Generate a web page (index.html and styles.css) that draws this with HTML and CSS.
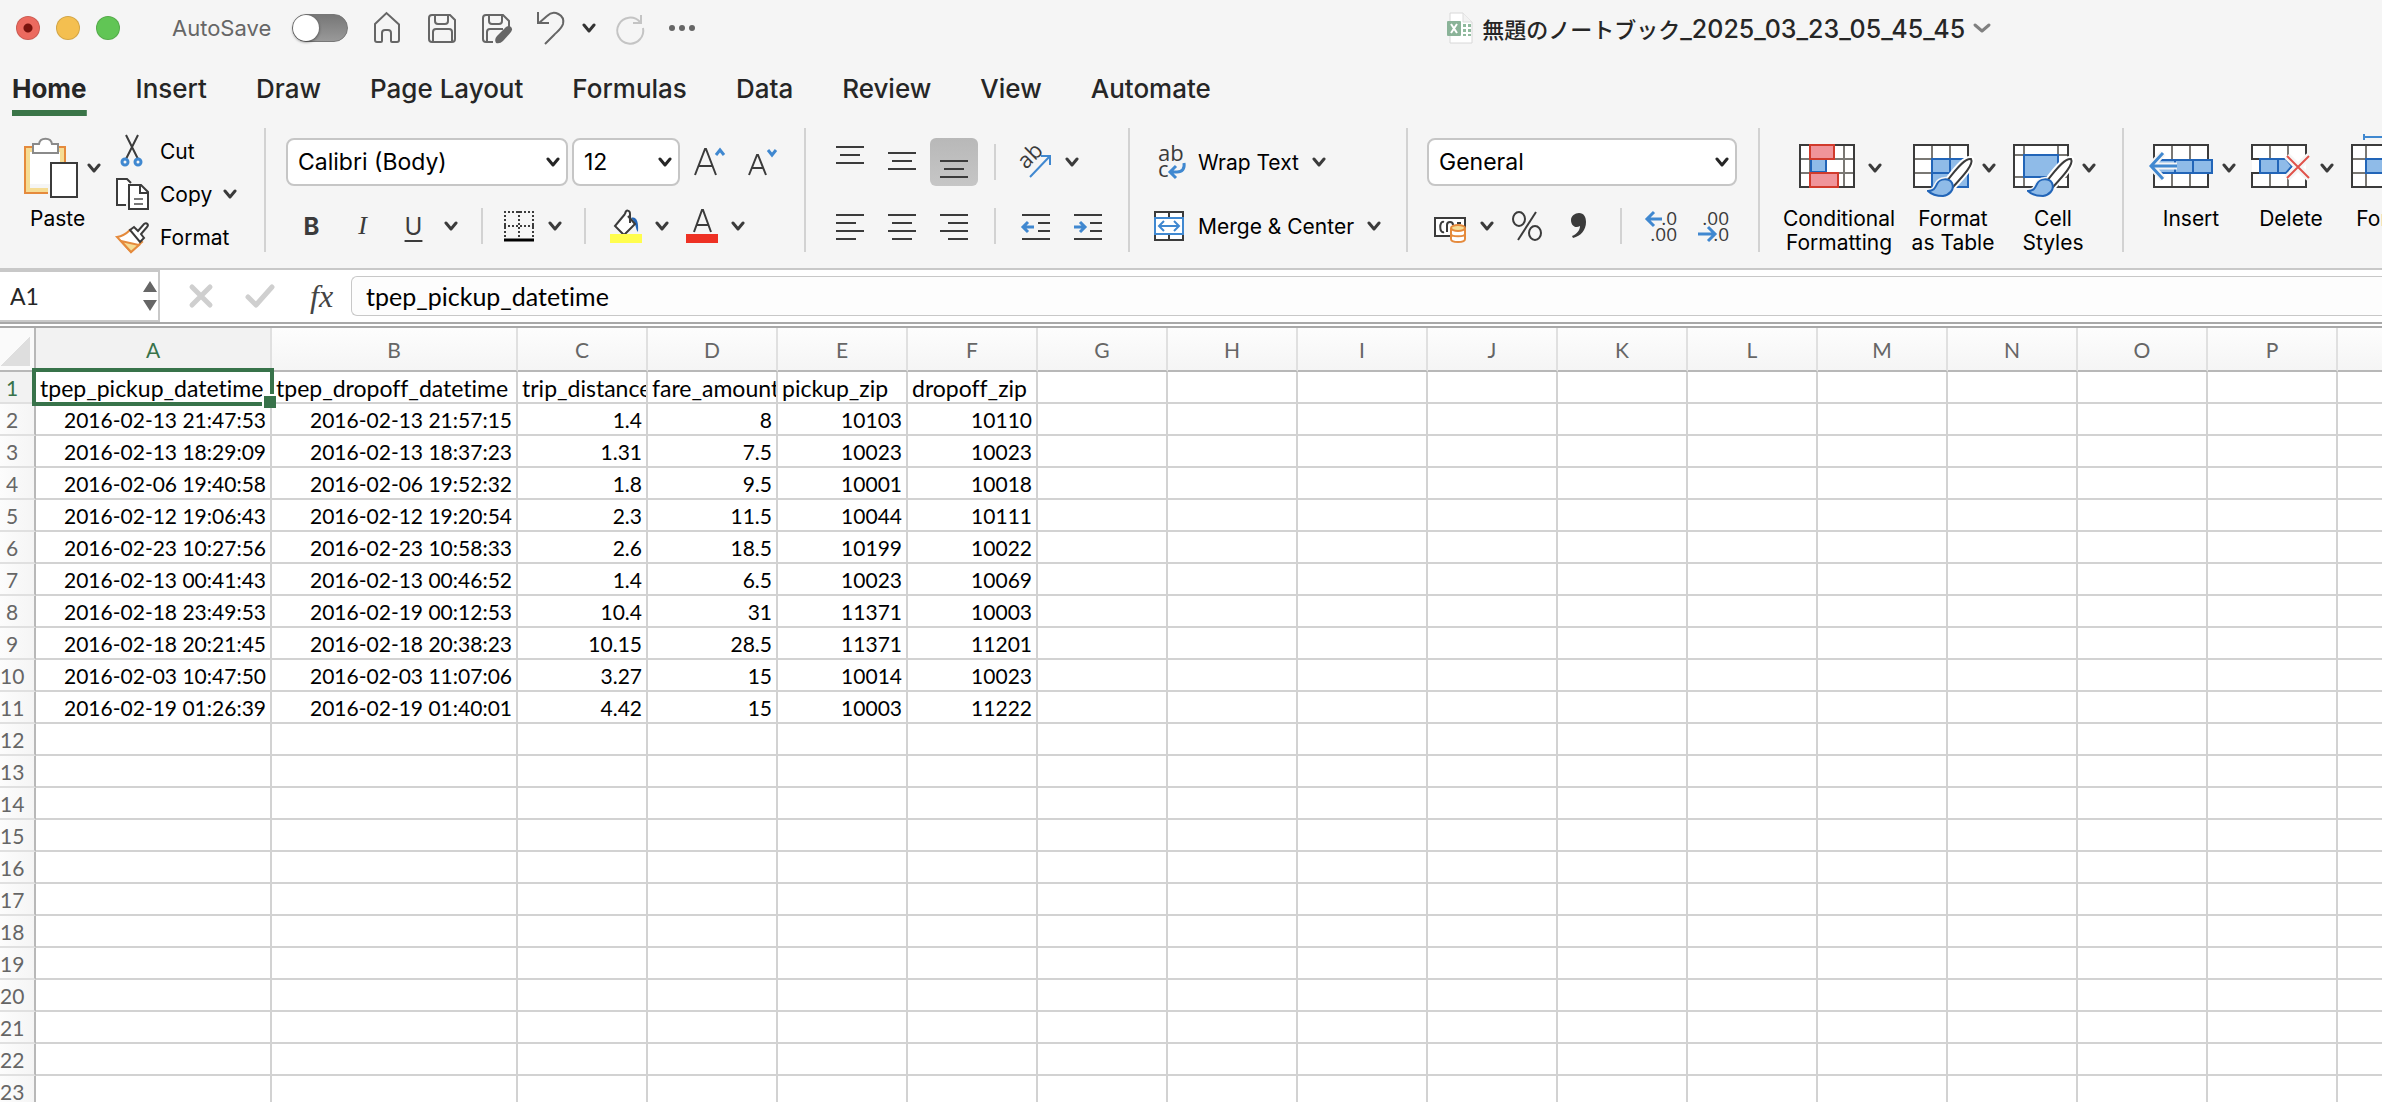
FILE: index.html
```html
<!DOCTYPE html>
<html lang="en">
<head>
<meta charset="utf-8">
<title>無題のノートブック_2025_03_23_05_45_45</title>
<link rel="stylesheet" href="styles.css">
</head>
<body>
<svg class="symbols" aria-hidden="true">
  <symbol id="chev" viewBox="0 0 14 10"><path d="M2 2l5 6 5-6" fill="none" stroke="currentColor" stroke-width="3" stroke-linecap="round" stroke-linejoin="round"/></symbol>
  <symbol id="brush" viewBox="0 0 48 42">
    <path d="M44 3C39 2 32 9 20 25l6 6C37 19 47 8 44 3z" fill="#fff" stroke="#fff" stroke-width="6"/>
    <path d="M1 35c6 0 7-3 9-7 3-6 12-6 15-1 3 7-3 12-9 13-6 0-11-1-15-5z" fill="#8fbbe8" stroke="#f5f5f5" stroke-width="5"/>
    <path d="M44 3C39 2 32 9 20 25l6 6C37 19 47 8 44 3z" fill="#fff" stroke="#3b3b3b" stroke-width="2"/>
    <path d="M1 35c6 0 7-3 9-7 3-6 12-6 15-1 3 7-3 12-9 13-6 0-11-1-15-5z" fill="#8fbbe8" stroke="#2265b8" stroke-width="2"/>
  </symbol>
</svg>

<header class="titlebar">
  <div class="lights">
    <button class="light red" aria-label="Close"></button>
    <button class="light yellow" aria-label="Minimize"></button>
    <button class="light green" aria-label="Zoom"></button>
  </div>
  <label class="autosave"><span>AutoSave</span><input type="checkbox" class="switch"></label>
  <div class="quick">
    <button aria-label="Home"><svg width="32" height="32" viewBox="0 0 32 32"><path d="M3 12L14.500 1 27 12.500V28q0 2-2 2h-5q-1 0-1-1v-8q0-3-3-3h-3q-3 0-3 3v8q0 1-1 1H5q-2 0-2-2z"/></svg></button>
    <button aria-label="Save"><svg width="32" height="32" viewBox="0 0 32 32"><path d="M6 3h18l5 5v19q0 3-3 3H6q-3 0-3-3V6q0-3 3-3zM9 3v6q0 3 3 3h7q3 0 3-3V3M7 30V20q0-3 3-3h13q3 0 3 3v10"/></svg></button>
    <button aria-label="Save As"><svg width="34" height="32" viewBox="0 0 34 32"><path d="M29 15V9l-6-6H6Q3 3 3 6v21q0 3 3 3h7M9 3v6q0 3 3 3h7q3 0 3-3V3M7 30V20q0-3 3-3h13"/><path class="solid" d="M16 31q-2-4 1-7l9-9q3-2 5 0t0 5l-8 9q-3 3-7 2z"/></svg></button>
    <button aria-label="Undo"><svg width="30" height="34" viewBox="0 0 30 34"><path d="M2 1v11h11M3 12L11 5c7-7 18-1 16 8-1 4-5 7-9 11l-9 9"/></svg></button>
    <button aria-label="Undo history" class="dark"><svg width="14" height="10"><use href="#chev"/></svg></button>
    <button aria-label="Redo" class="faint"><svg width="32" height="32" viewBox="0 0 32 32"><path d="M27 3v8h-8M26 10A13 13 0 1 0 29 16"/></svg></button>
    <button aria-label="More"><svg width="28" height="8" viewBox="0 0 28 8"><g class="solid"><circle cx="4" cy="4" r="3"/><circle cx="14" cy="4" r="3"/><circle cx="24" cy="4" r="3"/></g></svg></button>
  </div>
  <button class="doc">
    <svg width="28" height="34" viewBox="0 0 28 34"><path d="M4 2h13l9 9v21H4z" fill="#fff" stroke="#d8d8d8"/><path d="M17 2v9h9" fill="#f2f2f2" stroke="#ddd"/><path d="M17 13h3v3h-3zm5 0h3v3h-3zm-5 5h3v3h-3zm5 0h3v3h-3zm-5 5h3v2h-3zm5 0h3v2h-3z" fill="#8fba9d"/><rect x="1" y="10" width="14" height="15" rx="1" fill="#8ab398"/><path d="M5 13l6 9M11 13l-6 9" stroke="#fff" stroke-width="2"/></svg>
    <span>無題のノートブック<span class="stamp">_2025_03_23_05_45_45</span></span>
    <svg class="grey" width="18" height="12" viewBox="0 0 18 12"><path d="M2 3l7 6 7-6" fill="none" stroke="currentColor" stroke-width="3" stroke-linecap="round" stroke-linejoin="round"/></svg>
  </button>
</header>

<nav class="tabs">
  <a href="#home" class="active">Home</a><a href="#insert">Insert</a><a href="#draw">Draw</a><a href="#layout">Page Layout</a><a href="#formulas">Formulas</a><a href="#data">Data</a><a href="#review">Review</a><a href="#view">View</a><a href="#automate">Automate</a>
</nav>

<section class="ribbon">
  <div class="group clipboard">
    <button class="big">
      <span class="art"><svg width="54" height="60" viewBox="0 0 54 60"><path d="M3 10h38v36H3z" fill="#fff"/><path d="M24 55H1V9h40v16" fill="none" stroke="#e58a3c" stroke-width="2"/><path d="M24 52H4V12h34v12" fill="none" stroke="#f5dc94" stroke-width="4"/><path d="M9 6h6c1-7 12-7 13 0h6v9H9z" fill="#fff" stroke="#8a8a8a" stroke-width="2"/><path d="M27 25h26v34H27z" fill="#fff" stroke="#3b3b3b" stroke-width="2"/></svg><svg width="14" height="10"><use href="#chev"/></svg></span>
      <span>Paste</span>
    </button>
    <div class="stack">
      <button class="item"><svg width="34" height="34" viewBox="0 0 34 34"><path d="M11 1l12 24M23 1L11 25" stroke="#3b3b3b" stroke-width="2"/><g fill="none" stroke="#4088d0" stroke-width="3"><circle cx="10" cy="28" r="3"/><circle cx="23" cy="28" r="3"/></g></svg>Cut</button>
      <button class="item"><svg width="34" height="34" viewBox="0 0 34 34"><g fill="#fff" stroke="#3b3b3b" stroke-width="2"><path d="M11 28H2V2h10l4 4"/><path d="M14 8h12l7 7v17H14z"/><path d="M25 8v8h8" fill="none"/></g><path d="M19 22h9M19 27h9" stroke="#777" stroke-width="2"/></svg>Copy<svg width="14" height="10"><use href="#chev"/></svg></button>
      <button class="item"><svg width="34" height="34" viewBox="0 0 34 34"><path d="M2 17q7-1 13-7l12 12q-5 4-11 10z" fill="#fff" stroke="#e58a3c" stroke-width="2"/><path d="M6 21l18 4-8 7z" fill="#f5dc94" stroke="#e58a3c" stroke-width="2"/><path d="M15 10l4-3 4 4 6-7c3-2 5 1 3 3l-6 7 3 4-4 4z" fill="#fff" stroke="#3b3b3b" stroke-width="2"/></svg>Format</button>
    </div>
  </div>

  <div class="group font">
    <div class="row">
      <div class="pick family"><select aria-label="Font"><option>Calibri (Body)</option></select><svg width="14" height="10"><use href="#chev"/></svg></div>
      <div class="pick size"><select aria-label="Font size"><option>12</option></select><svg width="14" height="10"><use href="#chev"/></svg></div>
      <button class="tool" aria-label="Increase font size"><svg width="32" height="30" viewBox="0 0 32 30"><path d="M1 28L11 2h1l10 26M5 19h14" class="ink"/><path d="M22 8l4-5 4 5" class="blue"/></svg></button>
      <button class="tool" aria-label="Decrease font size"><svg width="32" height="30" viewBox="0 0 32 30"><path d="M3 28L11 8h1l8 20M6 21h11" class="ink"/><path d="M22 3l4 5 4-5" class="blue"/></svg></button>
    </div>
    <div class="row">
      <button class="tool letter"><b>B</b></button>
      <button class="tool letter"><i>I</i></button>
      <button class="tool letter"><u>U</u></button>
      <button class="tool" aria-label="Underline style"><svg width="14" height="10"><use href="#chev"/></svg></button>
      <span class="bar wide"></span>
      <button class="split" aria-label="Borders"><svg width="32" height="32" viewBox="0 0 32 32"><path d="M1 2h30M2 1v28M30 1v28M16 1v28M1 16h30" fill="none" stroke="#3b3b3b" stroke-width="2" stroke-dasharray="2 2"/><path d="M1 30h30" stroke="#000" stroke-width="3"/></svg><svg width="14" height="10"><use href="#chev"/></svg></button>
      <span class="bar wide"></span>
      <button class="split" aria-label="Fill color"><svg width="32" height="34" viewBox="0 0 32 34"><path d="M21 9c5-2 8 3 7 14-3-3-1-8-7-14z" fill="#2265b8"/><path d="M15 5L5 17l9 9 11-11-7-8M15 5c1-5 5-4 5 0v9" fill="#fff" stroke="#3b3b3b" stroke-width="2"/><path d="M0 25h32v9H0z" fill="#fffd4e"/></svg><svg width="14" height="10"><use href="#chev"/></svg></button>
      <button class="split" aria-label="Font color"><svg width="32" height="34" viewBox="0 0 32 34"><path d="M8 23L16 1h1l8 22M11 16h11" class="ink"/><path d="M0 25h32v9H0z" fill="#ee3124"/></svg><svg width="14" height="10"><use href="#chev"/></svg></button>
    </div>
  </div>

  <div class="group align">
    <div class="row">
      <button class="tool" aria-label="Top align"><svg width="28" height="36"><path class="ink" d="M0 3h28M4 11h20M0 19h28"/></svg></button>
      <button class="tool" aria-label="Middle align"><svg width="28" height="36"><path class="ink" d="M0 9h28M4 17h20M0 25h28"/></svg></button>
      <button class="tool on" aria-label="Bottom align" aria-pressed="true"><svg width="28" height="36"><path class="ink" d="M0 17h28M4 25h20M0 33h28"/></svg></button>
      <span class="bar"></span>
      <button class="split" aria-label="Orientation"><svg width="34" height="34" viewBox="0 0 34 34"><text x="8" y="25" transform="rotate(-45 8 25)" class="glyph">ab</text><path d="M12 32L32 11M23 11h9v9" class="blue thin"/></svg><svg width="14" height="10"><use href="#chev"/></svg></button>
    </div>
    <div class="row">
      <button class="tool" aria-label="Align left"><svg width="28" height="32"><path class="ink" d="M0 5h28M0 13h20M0 21h28M0 29h20"/></svg></button>
      <button class="tool" aria-label="Center"><svg width="28" height="32"><path class="ink" d="M0 5h28M4 13h20M0 21h28M4 29h20"/></svg></button>
      <button class="tool" aria-label="Align right"><svg width="28" height="32"><path class="ink" d="M0 5h28M8 13h20M0 21h28M8 29h20"/></svg></button>
      <span class="bar"></span>
      <button class="tool" aria-label="Decrease indent"><svg width="28" height="32"><path class="ink" d="M0 5h28M16 13h12M16 21h12M0 29h28"/><path class="blue" d="M12 17H2M6 12l-5 5 5 5"/></svg></button>
      <button class="tool" aria-label="Increase indent"><svg width="28" height="32"><path class="ink" d="M0 5h28M16 13h12M16 21h12M0 29h28"/><path class="blue" d="M0 17h10M6 12l5 5-5 5"/></svg></button>
    </div>
  </div>

  <div class="group wrap">
    <div class="row"><button class="item"><svg width="32" height="36" viewBox="0 0 32 36"><text class="glyph"><tspan x="5" y="17">ab</tspan><tspan x="5" y="33">c</tspan></text><path d="M31 19c1 6-2 9-7 9h-6M23 22l-6 6 6 6" class="blue"/></svg>Wrap Text<svg width="14" height="10"><use href="#chev"/></svg></button></div>
    <div class="row"><button class="item"><svg width="32" height="32" viewBox="0 0 32 32"><path d="M2 2h28v28H2zM16 2v28" fill="#fff" stroke="#3b3b3b" stroke-width="2"/><path d="M2 8h28v16H2z" fill="#fff" stroke="#4088d0" stroke-width="2"/><path d="M7 16h18M11 11l-5 5 5 5M21 11l5 5-5 5" class="blue thin"/></svg>Merge &amp; Center<svg width="14" height="10"><use href="#chev"/></svg></button></div>
  </div>

  <div class="group number">
    <div class="row">
      <div class="pick format"><select aria-label="Number format"><option>General</option></select><svg width="14" height="10"><use href="#chev"/></svg></div>
    </div>
    <div class="row">
      <button class="split" aria-label="Accounting format"><svg width="34" height="32" viewBox="0 0 34 32"><path d="M2 8h30v18H2z" fill="#fff" stroke="#3b3b3b" stroke-width="2"/><path d="M11 12c-5-2-5 12 0 10M14 22V15c0-4 6-4 6 0M24 13h4" fill="none" stroke="#3b3b3b" stroke-width="2"/><path d="M17 18h17v14H17z" fill="#f5f5f5"/><path d="M18 18v11c0 4 14 4 14 0V18M18 24c0 3 14 3 14 0" fill="#fff" stroke="#e58a3c" stroke-width="2"/><ellipse cx="25" cy="18" rx="7" ry="3" fill="#f5dc94" stroke="#e58a3c" stroke-width="2"/></svg><svg width="14" height="10"><use href="#chev"/></svg></button>
      <button class="tool" aria-label="Percent"><svg width="32" height="32" viewBox="0 0 32 32"><g class="ink"><ellipse cx="8" cy="9" rx="6" ry="7"/><ellipse cx="24" cy="23" rx="6" ry="7"/><path d="M25 2L7 30"/></g></svg></button>
      <button class="tool" aria-label="Comma"><svg width="18" height="30" viewBox="0 0 18 30"><path d="M9 2c5 0 7 4 7 9 0 8-5 14-13 16l-1-2c5-2 8-6 8-10C5 18 1 14 1 9c0-4 4-7 8-7z" fill="#3b3b3b"/></svg></button>
      <span class="bar"></span>
      <button class="tool" aria-label="Increase decimal"><svg width="34" height="34" viewBox="0 0 34 34"><text class="digits"><tspan x="33" y="16">.0</tspan><tspan x="33" y="32">.00</tspan></text><path d="M18 10H4M10 3l-7 7 7 7" class="blue"/></svg></button>
      <button class="tool" aria-label="Decrease decimal"><svg width="34" height="34" viewBox="0 0 34 34"><text class="digits"><tspan x="33" y="16">.00</tspan><tspan x="33" y="32">.0</tspan></text><path d="M2 25h16M12 18l7 7-7 7" class="blue"/></svg></button>
    </div>
  </div>

  <div class="group styles">
    <button class="big">
      <span class="art"><svg width="56" height="60" viewBox="0 0 56 60"><path d="M1 7h54v42H1z" fill="#fff"/><path d="M1 21h54M1 35h54M11 7v42M45 7v42" stroke="#7a7874" stroke-width="2"/><path d="M1 7h54v42H1z" fill="none" stroke="#3b3b3b" stroke-width="2"/><path d="M12 21h15v13H12z" fill="#8fbbe8" stroke="#2265b8" stroke-width="2"/><path d="M28 22h16v12H28z" fill="#fff"/><path d="M11 7h24v14H11zM11 35h28v14H11z" fill="#f0949a" stroke="#d13a2c" stroke-width="2"/></svg><svg width="14" height="10"><use href="#chev"/></svg></span>
      <span>Conditional<br>Formatting</span>
    </button>
    <button class="big">
      <span class="art"><svg width="56" height="60" viewBox="0 0 56 60"><path d="M1 7h54v42H1z" fill="#fff"/><path d="M1 21h54M1 35h54M19 7v42M37 7v42" stroke="#7a7874" stroke-width="2"/><path d="M1 7h54v42H1z" fill="none" stroke="#3b3b3b" stroke-width="2"/><path d="M19 21h36v28H19zM19 35h36M37 21v28" fill="#8fbbe8" stroke="#2265b8" stroke-width="2"/><use href="#brush" x="14" y="18" width="48" height="42"/></svg><svg width="14" height="10"><use href="#chev"/></svg></span>
      <span>Format<br>as Table</span>
    </button>
    <button class="big">
      <span class="art"><svg width="56" height="60" viewBox="0 0 56 60"><path d="M1 7h54v42H1z" fill="#fff"/><path d="M1 17h54M1 39h54M11 7v42M45 7v42" stroke="#7a7874" stroke-width="2"/><path d="M1 7h54v42H1z" fill="none" stroke="#3b3b3b" stroke-width="2"/><path d="M11 17h34v22H11z" fill="#8fbbe8" stroke="#2265b8" stroke-width="2"/><use href="#brush" x="14" y="18" width="48" height="42"/></svg><svg width="14" height="10"><use href="#chev"/></svg></span>
      <span>Cell<br>Styles</span>
    </button>
  </div>

  <div class="group cells">
    <button class="big">
      <span class="art"><svg width="60" height="60" viewBox="0 0 60 60"><path d="M5 7h54v42H5z" fill="#fff"/><path d="M23 7v42M41 7v42" stroke="#7a7874" stroke-width="2"/><path d="M5 7h54v42H5z" fill="none" stroke="#3b3b3b" stroke-width="2"/><path d="M8 22h55v13H8zM26 22v13M44 22v13" fill="#8fbbe8" stroke="#2265b8" stroke-width="2"/><path d="M28 28H4M14 15L2 28l12 13" fill="none" stroke="#f5f5f5" stroke-width="7"/><path d="M28 28H3M14 15L2 28l12 13" class="blue"/></svg><svg width="14" height="10"><use href="#chev"/></svg></span>
      <span>Insert</span>
    </button>
    <button class="big">
      <span class="art"><svg width="56" height="60" viewBox="0 0 56 60"><path d="M1 7h54v42H1z" fill="#fff"/><path d="M19 7v42M37 7v42" stroke="#7a7874" stroke-width="2"/><path d="M55 17V7H1v14h8M55 40v9H1V35h8" fill="none" stroke="#3b3b3b" stroke-width="2"/><path d="M9 21h26l6 7-6 7H9zM27 21v14" fill="#8fbbe8" stroke="#2265b8" stroke-width="2"/><path d="M36 18l22 22M58 18L36 40" fill="none" stroke="#f5f5f5" stroke-width="7"/><path d="M36 18l22 22M58 18L36 40" fill="none" stroke="#e0524a" stroke-width="2"/></svg><svg width="14" height="10"><use href="#chev"/></svg></span>
      <span>Delete</span>
    </button>
    <button class="big">
      <span class="art"><svg width="56" height="60" viewBox="0 0 56 60"><path d="M1 7h54v42H1z" fill="#fff"/><path d="M1 21h54M1 35h54M15 7v42M41 7v42" stroke="#7a7874" stroke-width="2"/><path d="M1 7h54v42H1z" fill="none" stroke="#3b3b3b" stroke-width="2"/><path d="M15 21h26v14H15z" fill="#8fbbe8" stroke="#2265b8" stroke-width="2"/><path d="M13-1h28M13-4v6M41-4v6" class="blue thin"/></svg><svg width="14" height="10"><use href="#chev"/></svg></span>
      <span>Format</span>
    </button>
  </div>
</section>

<section class="formula">
  <div class="namebox">
    <input aria-label="Name box" value="A1">
    <svg width="16" height="32" viewBox="0 0 16 32"><path d="M8 1l7 11H1zM8 31l7-11H1z" fill="#666"/></svg>
  </div>
  <button aria-label="Cancel"><svg width="24" height="24" viewBox="0 0 24 24"><path d="M3 3l18 18M21 3L3 21" stroke="#cfcfcf" stroke-width="5" stroke-linecap="round"/></svg></button>
  <button aria-label="Enter"><svg width="30" height="24" viewBox="0 0 30 24"><path d="M3 13l8 8L27 3" fill="none" stroke="#cfcfcf" stroke-width="5" stroke-linecap="round" stroke-linejoin="round"/></svg></button>
  <button class="fx" aria-label="Insert function"><i>fx</i></button>
  <input class="entry" aria-label="Formula" value="tpep_pickup_datetime">
</section>

<main class="sheet"><table><colgroup><col class="rows"><col class="wide-a"><col class="wide-b"></colgroup></table></main>
<script src="script.js"></script>
</body>
</html>
```

FILE: script.js
```javascript
const columns = 'ABCDEFGHIJKLMNOPQ'.split('');
const rowCount = 23;
const data = [
  ['tpep_pickup_datetime', 'tpep_dropoff_datetime', 'trip_distance', 'fare_amount', 'pickup_zip', 'dropoff_zip'],
  ['2016-02-13 21:47:53', '2016-02-13 21:57:15', '1.4', '8', '10103', '10110'],
  ['2016-02-13 18:29:09', '2016-02-13 18:37:23', '1.31', '7.5', '10023', '10023'],
  ['2016-02-06 19:40:58', '2016-02-06 19:52:32', '1.8', '9.5', '10001', '10018'],
  ['2016-02-12 19:06:43', '2016-02-12 19:20:54', '2.3', '11.5', '10044', '10111'],
  ['2016-02-23 10:27:56', '2016-02-23 10:58:33', '2.6', '18.5', '10199', '10022'],
  ['2016-02-13 00:41:43', '2016-02-13 00:46:52', '1.4', '6.5', '10023', '10069'],
  ['2016-02-18 23:49:53', '2016-02-19 00:12:53', '10.4', '31', '11371', '10003'],
  ['2016-02-18 20:21:45', '2016-02-18 20:38:23', '10.15', '28.5', '11371', '11201'],
  ['2016-02-03 10:47:50', '2016-02-03 11:07:06', '3.27', '15', '10014', '10023'],
  ['2016-02-19 01:26:39', '2016-02-19 01:40:01', '4.42', '15', '10003', '11222'],
];

const table = document.querySelector('.sheet table');
const group = table.querySelector('colgroup');
columns.slice(2).forEach(() => group.append(document.createElement('col')));

const head = table.createTHead().insertRow();
['', ...columns].forEach((name, i) => {
  const th = document.createElement('th');
  th.scope = 'col';
  th.textContent = name;
  if (i === 0) th.className = 'corner';
  if (i === 1) th.className = 'current';
  head.append(th);
});

const body = table.createTBody();
for (let r = 0; r < rowCount; r++) {
  const tr = body.insertRow();
  const th = document.createElement('th');
  th.scope = 'row';
  th.textContent = r + 1;
  if (r === 0) th.className = 'current';
  tr.append(th);
  columns.forEach((_, c) => {
    const td = tr.insertCell();
    td.textContent = (data[r] && data[r][c]) || '';
    if (r === 0) td.className = c === 0 ? 'label selected' : 'label';
  });
}
```

FILE: styles.css
```css
* { box-sizing: border-box; }
body {
  margin: 0;
  height: 100vh;
  display: flex;
  flex-direction: column;
  overflow: hidden;
  background: #f5f5f5;
  color: #000;
  font-family: Inter, "Noto Sans CJK JP", sans-serif;
  font-size: 21px;
}
.symbols { position: absolute; width: 0; height: 0; }
svg { display: block; flex: none; overflow: visible; color: #3b3b3b; }
button, select, input { font: inherit; color: inherit; margin: 0; padding: 0; border: 0; background: none; }
.ink { fill: none; stroke: #3b3b3b; stroke-width: 2; }
.blue { fill: none; stroke: #4088d0; stroke-width: 3; }
.blue.thin { stroke-width: 2; }
.glyph { font-size: 22px; fill: #3b3b3b; font-family: "Open Sans", sans-serif; }
.digits { font-size: 19px; fill: #3b3b3b; text-anchor: end; font-family: "Open Sans", sans-serif; }

/* Title bar */
.titlebar { flex: none; display: flex; align-items: center; height: 56px; padding-left: 16px; white-space: nowrap; }
.lights { display: flex; gap: 16px; }
.light { width: 24px; height: 24px; border-radius: 50%; border: 1px solid #0002; }
.red { background: radial-gradient(circle, #7a130d 4px, #ec6a5f 5px); }
.yellow { background: #f4bf50; }
.green { background: #61c555; }
.autosave { display: flex; align-items: center; gap: 21px; margin-left: 52px; color: #666; font-size: 22px; }
.switch { appearance: none; display: flex; width: 56px; height: 28px; border-radius: 14px; border: 1px solid #777; background: linear-gradient(#777, #999); }
.switch::before { content: ""; width: 26px; height: 26px; border-radius: 50%; background: #fff; box-shadow: 0 1px 3px #0008; }
.quick { display: flex; align-items: center; gap: 22px; margin-left: 24px; }
.quick svg { fill: none; stroke: #666; stroke-width: 2; color: #333; }
.quick .solid { fill: #666; stroke: none; }
.quick .faint svg { stroke: #c4c4c4; }
.quick .dark { margin: 0 -4px 0 -6px; }
.doc { display: flex; align-items: center; gap: 8px; margin-left: 750px; font-size: 22px; font-weight: 500; color: #262626; }
.stamp { font-size: 25px; }
.grey { color: #808080; }

/* Ribbon tabs */
.tabs { flex: none; display: flex; gap: 49px; height: 60px; padding: 0 12px; font-size: 26px; font-weight: 500; white-space: nowrap; }
.tabs a { color: #262626; text-decoration: none; line-height: 54px; padding-top: 6px; }
.tabs .active { font-weight: 700; background: linear-gradient(#3a7548, #3a7548) bottom / 100% 6px no-repeat; }

/* Ribbon */
.ribbon { flex: none; display: flex; padding: 12px 0 16px; overflow: hidden; white-space: nowrap; border-bottom: 2px solid #c8c8c8; }
.group { flex: none; height: 124px; border-right: 2px solid #d2d2d2; }
.group:last-child { border: 0; }
.row { display: flex; align-items: center; height: 48px; margin-top: 10px; }
.row + .row { height: 40px; margin-top: 20px; }
.big { display: flex; flex-direction: column; align-items: center; gap: 9px; padding-top: 10px; line-height: 24px; }
.art, .split, .item { display: flex; align-items: center; }
.art { height: 60px; gap: 13px; padding-left: 2px; }
.item { gap: 11px; }
.split { gap: 13px; }
.tool { display: flex; align-items: center; justify-content: center; width: 52px; height: 48px; }
.bar { width: 2px; height: 36px; margin: 0 14px; background: #d2d2d2; }
.bar.wide { margin: 0 20px 0 18px; }
.split + .bar.wide { margin: 0 24px 0 22px; }

.clipboard { display: flex; width: 266px; padding-left: 24px; }
.clipboard .big { align-self: flex-start; width: 78px; align-items: flex-start; }
.clipboard .art { gap: 9px; padding-left: 0; }
.clipboard .big > span:last-child { padding-left: 6px; }
.stack { display: flex; flex-direction: column; gap: 9px; padding: 6px 0 0 13px; }

.font { width: 540px; padding-left: 20px; }
.pick { display: grid; align-items: center; }
.pick > * { grid-area: 1 / 1; }
.pick svg { justify-self: end; margin-right: 8px; pointer-events: none; color: #262626; }
.pick select { appearance: none; width: 100%; height: 48px; padding: 0 10px; border: 2px solid #c6c6c6; border-radius: 8px; background: #fff; font-size: 23px; }
.family { width: 282px; }
.size { width: 108px; margin: 0 4px; }
.font .row + .row .tool { width: 51px; }
.font .row + .row .letter + .tool:not(.letter) { width: 24px; }
.letter { font-size: 24px; color: #3b3b3b; }
.letter i { font-family: "Liberation Serif", serif; font-size: 26px; }
.letter u { text-underline-offset: 5px; }
.split + .split { margin-left: 17px; }

.align { width: 324px; padding-left: 18px; }
.align .on { width: 48px; margin: 0 2px; border-radius: 6px; background: linear-gradient(#b8b8b8, #c6c6c6); }
.align .split { margin-left: 8px; }

.wrap { width: 278px; padding-left: 23px; }
.wrap .item { gap: 13px; }

.number { width: 352px; padding-left: 19px; }
.number .format { width: 310px; }
.number .split { margin: 0 7px 0 6px; }
.number .bar { margin: 0 13px 0 15px; }

.styles { display: flex; width: 364px; padding-left: 21px; }
.styles .big { width: 116px; }
.styles .big:nth-child(2) { width: 112px; }
.styles .big:nth-child(3) { width: 88px; }
.cells { display: flex; padding-left: 17px; }
.cells .big { width: 100px; }

/* Formula bar */
.formula { flex: none; display: flex; align-items: center; height: 58px; background: #fff; border-bottom: 6px double #a8a8a8; font-family: Lato, sans-serif; font-variant-ligatures: none; }
.namebox { display: flex; align-items: center; width: 160px; height: 52px; padding: 0 0 0 10px; border: solid #c8c8c8; border-width: 2px 2px 2px 0; margin-right: 29px; }
.namebox input { flex: 1; min-width: 0; font-size: 23px; color: #262626; }
.formula button { margin-right: 32px; }
.formula .fx { font: 32px "Liberation Serif", serif; color: #444; margin: 0 18px 0 3px; }
.entry { flex: 1; height: 40px; padding: 0 14px; border: 1px solid #c8c8c8; border-right: 0; border-radius: 6px 0 0 6px; background: #fdfdfd; font-size: 25px; }

/* Sheet */
.sheet { flex: 1; min-height: 0; overflow: hidden; background: #fff; font-family: Lato, sans-serif; font-size: 21px; font-variant-ligatures: none; }
table { width: 2468px; table-layout: fixed; border-collapse: separate; border-spacing: 0; }
col { width: 130px; }
.rows { width: 36px; }
.wide-a { width: 236px; }
.wide-b { width: 246px; }
th { padding: 0; font-weight: 400; color: #666; }
thead th { height: 44px; border-bottom: 2px solid #b8b8b8; border-right: 2px solid #e0e0e0; background: linear-gradient(#fdfdfd, #f5f5f5); }
tbody th { border-right: 2px solid #b8b8b8; border-bottom: 2px solid #e0e0e0; padding: 2px 10px 0 0; background: linear-gradient(90deg, #fcfcfc, #f5f5f5); }
th.current { color: #38734a; background: #f2f2f2; }
thead .corner { border-right-color: #b8b8b8; background: linear-gradient(135deg, transparent 50%, #dedede 50%) 0 8px / 30px 30px no-repeat, #fafafa; }
td { height: 32px; padding: 2px 4px 0; border: solid #d2d2d2; border-width: 0 2px 2px 0; text-align: right; white-space: nowrap; overflow: hidden; }
tbody tr { height: 32px; line-height: 28px; }
td.label { text-align: left; font-size: 23px; }
.selected { position: relative; overflow: visible; }
.selected::before { content: ""; position: absolute; inset: -4px; border: 4px solid #38734a; }
.selected::after { content: ""; position: absolute; right: -6px; bottom: -6px; width: 12px; height: 12px; border: solid #fff; border-width: 2px 0 0 2px; background: #38734a; }
```
